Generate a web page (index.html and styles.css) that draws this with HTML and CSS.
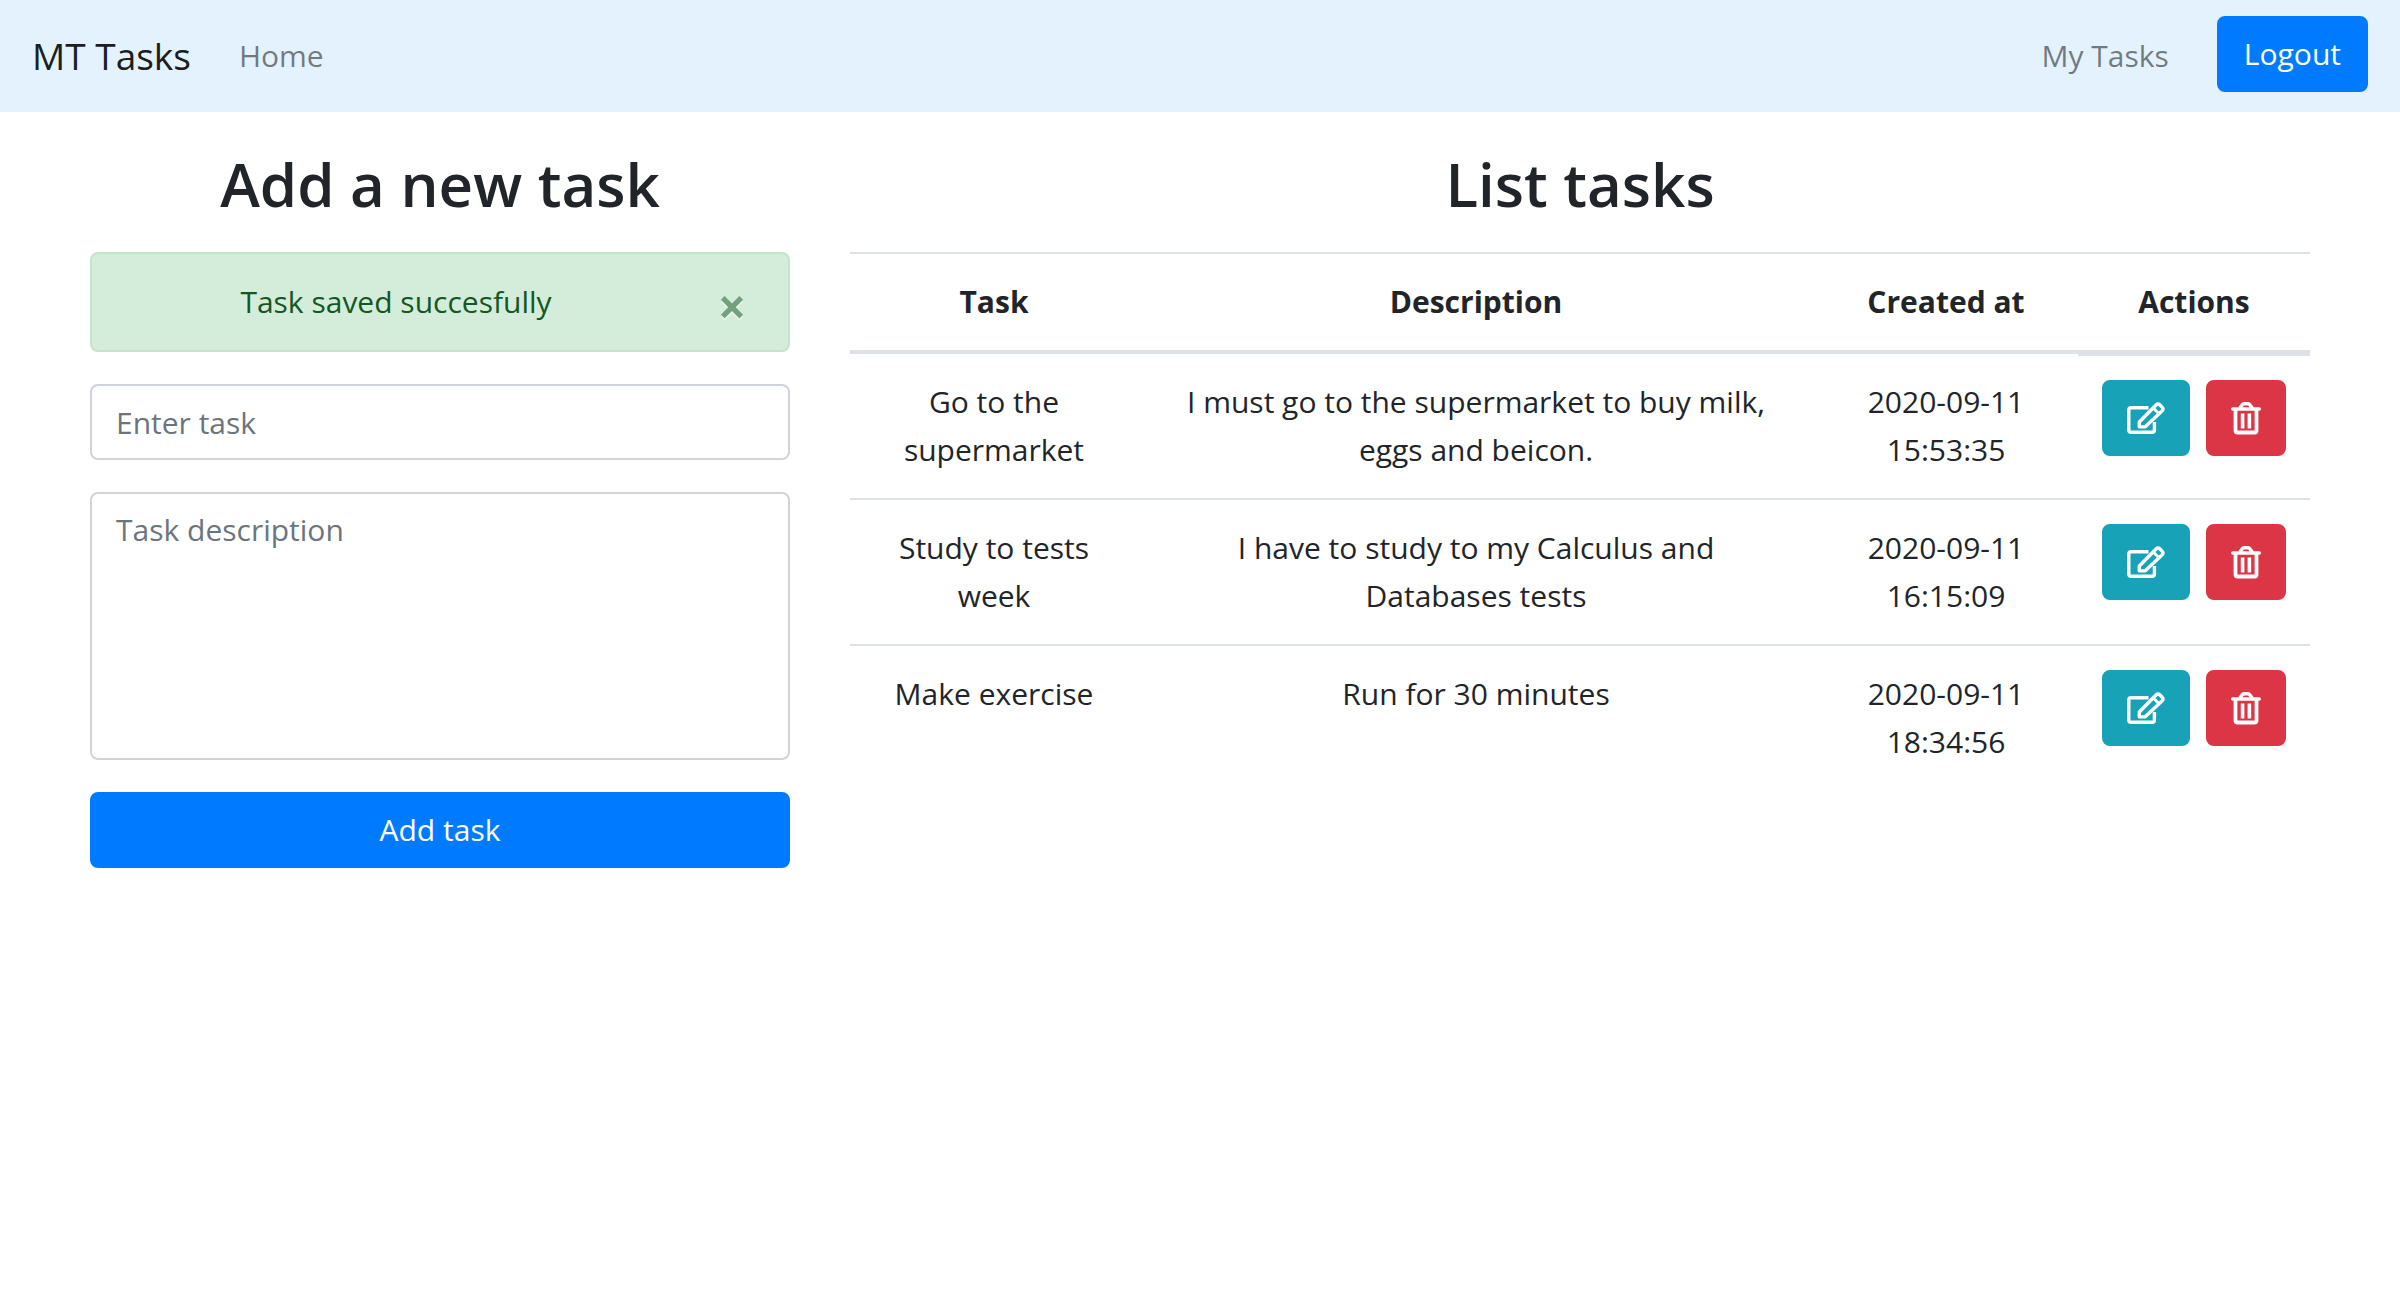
FILE: index.html
```html
<!DOCTYPE html>
<html lang="en">
<head>
<meta charset="utf-8">
<meta name="viewport" content="width=device-width, initial-scale=1">
<title>MT Tasks</title>
<link rel="stylesheet" href="styles.css">
</head>
<body>
<svg class="sprite" aria-hidden="true">
  <symbol id="icon-edit" viewBox="0 0 38 33">
    <path d="M21.500 5.700H4q-2.200 0-2.200 2.200v20.200q0 2.200 2.200 2.200h21.200q2.200 0 2.200-2.200V20" fill="none" stroke="currentColor" stroke-width="3.400"/>
    <path d="M12.300 24.900V20L29.300 2.800q1.700-1.700 3.400 0L35.200 5.300q1.700 1.700 0 3.400L18 24.900Z" fill="none" stroke="currentColor" stroke-width="3.400" stroke-linejoin="round"/>
    <path d="M26 5.800l6 6" fill="none" stroke="currentColor" stroke-width="3"/>
  </symbol>
  <symbol id="icon-trash" viewBox="0 0 30 33">
    <path d="M1.700 7H28.300M8.500 6.500L11 3q.8-1.300 2-1.300h4q1.200 0 2 1.300l2.500 3.500" fill="none" stroke="currentColor" stroke-width="3.400" stroke-linecap="round"/>
    <path d="M4.500 7V28.500q0 2 2 2h17q2 0 2-2V7" fill="none" stroke="currentColor" stroke-width="3.800"/>
    <path d="M11.600 11.500v15M18.400 11.500v15" fill="none" stroke="currentColor" stroke-width="3.600"/>
  </symbol>
</svg>

<nav class="navbar">
  <a class="navbar-brand" href="#">MT Tasks</a>
  <a class="nav-link" href="#">Home</a>
  <a class="nav-link nav-link-end" href="#">My Tasks</a>
  <button class="btn btn-primary btn-logout" type="button">Logout</button>
</nav>

<main class="row">
  <section class="col">
    <h2 class="title">Add a new task</h2>
    <div class="alert" role="alert">
      <span class="alert-text">Task saved succesfully</span>
      <button class="close" type="button" aria-label="Close">×</button>
    </div>
    <form class="task-form">
      <input class="form-control" type="text" placeholder="Enter task" aria-label="Enter task">
      <textarea class="form-control" rows="5" placeholder="Task description" aria-label="Task description"></textarea>
      <button class="btn btn-primary" type="submit">Add task</button>
    </form>
  </section>

  <section class="col">
    <h2 class="title">List tasks</h2>
    <table class="table">
      <colgroup>
        <col class="col-task"><col><col class="col-created"><col class="col-actions">
      </colgroup>
      <thead>
        <tr><th scope="col">Task</th><th scope="col">Description</th><th scope="col">Created at</th><th scope="col">Actions</th></tr>
      </thead>
      <tbody>
        <tr>
          <td>Go to the supermarket</td>
          <td>I must go to the supermarket to buy milk, eggs and beicon.</td>
          <td>2020-09-11 15:53:35</td>
          <td><div class="actions">
            <button class="btn btn-info" type="button" aria-label="Edit"><svg class="icon-edit"><use href="#icon-edit"/></svg></button>
            <button class="btn btn-danger" type="button" aria-label="Delete"><svg class="icon-trash"><use href="#icon-trash"/></svg></button>
          </div></td>
        </tr>
        <tr>
          <td>Study to tests week</td>
          <td>I have to study to my Calculus and Databases tests</td>
          <td>2020-09-11 16:15:09</td>
          <td><div class="actions">
            <button class="btn btn-info" type="button" aria-label="Edit"><svg class="icon-edit"><use href="#icon-edit"/></svg></button>
            <button class="btn btn-danger" type="button" aria-label="Delete"><svg class="icon-trash"><use href="#icon-trash"/></svg></button>
          </div></td>
        </tr>
        <tr>
          <td>Make exercise</td>
          <td>Run for 30 minutes</td>
          <td>2020-09-11 18:34:56</td>
          <td><div class="actions">
            <button class="btn btn-info" type="button" aria-label="Edit"><svg class="icon-edit"><use href="#icon-edit"/></svg></button>
            <button class="btn btn-danger" type="button" aria-label="Delete"><svg class="icon-trash"><use href="#icon-trash"/></svg></button>
          </div></td>
        </tr>
      </tbody>
    </table>
  </section>
</main>
</body>
</html>
```
FILE: styles.css
```css
*, *::before, *::after { box-sizing: border-box; }

body {
  margin: 0;
  background: #fff;
  color: #212529;
  font-family: "Open Sans", "Noto Sans", sans-serif;
  font-size: 30px;
  line-height: 48px;
}

button, input, textarea { font: inherit; }

.sprite { display: none; }

.navbar {
  display: flex;
  align-items: flex-start;
  padding: 16px 32px;
  background: #e3f2fd;
}

.navbar-brand {
  margin-right: 32px;
  padding: 10px 0;
  color: rgba(0, 0, 0, .9);
  font-size: 37px;
  line-height: 60px;
  text-decoration: none;
}

.nav-link {
  padding: 16px;
  color: rgba(0, 0, 0, .5);
  text-decoration: none;
}

.nav-link-end { margin-left: auto; }

.btn {
  display: flex;
  align-items: center;
  justify-content: center;
  height: 76px;
  padding: 0 25px;
  border: 2px solid transparent;
  border-radius: 8px;
  color: #fff;
  cursor: pointer;
}

.btn-primary { background: #007bff; border-color: #007bff; }
.btn-info { width: 88px; background: #17a2b8; border-color: #17a2b8; }
.btn-danger { width: 80px; background: #dc3545; border-color: #dc3545; }
.btn-logout { margin-left: 32px; }

.row {
  display: grid;
  grid-template-columns: minmax(0, 1fr) minmax(0, 2fr);
  padding: 34px 60px;
}

.col { padding: 0 30px; text-align: center; }

.title {
  margin: 0 0 30px;
  font-size: 60px;
  font-weight: 600;
  line-height: 76px;
}

.alert {
  display: flex;
  align-items: center;
  margin-bottom: 32px;
  border: 2px solid #c3e6cb;
  border-radius: 8px;
  background: #d4edda;
  color: #155724;
}

.alert-text { flex: 1; padding: 24px 0 24px 40px; }

.close {
  width: 112px;
  margin-left: 16px;
  padding: 8px 0 0;
  border: 0;
  background: none;
  color: inherit;
  font-size: 50px;
  font-weight: 700;
  line-height: 48px;
  text-shadow: 0 2px 0 #fff;
  opacity: .5;
  cursor: pointer;
}

.task-form { display: flex; flex-direction: column; gap: 32px; }

.form-control {
  width: 100%;
  padding: 12px 24px;
  border: 2px solid #ced4da;
  border-radius: 8px;
  background: #fff;
  color: #495057;
}

.form-control::placeholder { color: #6c757d; opacity: 1; }

input.form-control { height: 76px; }
textarea.form-control { display: block; resize: none; overflow: auto; }

.table {
  width: 100%;
  table-layout: fixed;
  border-collapse: separate;
  border-spacing: 0;
}

.col-task { width: 288px; }
.col-created { width: 264px; }
.col-actions { width: 232px; }

.table th, .table td {
  padding: 24px;
  border-top: 2px solid #dee2e6;
  vertical-align: top;
}

.table th { border-bottom: 4px solid #dee2e6; font-weight: 700; }
.table tbody tr:first-child td:not(:last-child) { border-top: 0; }
.table td:last-child { padding-bottom: 0; }

.actions { display: flex; gap: 16px; }

.icon-edit { flex: none; width: 38px; height: 33px; }
.icon-trash { flex: none; width: 30px; height: 33px; }
```
